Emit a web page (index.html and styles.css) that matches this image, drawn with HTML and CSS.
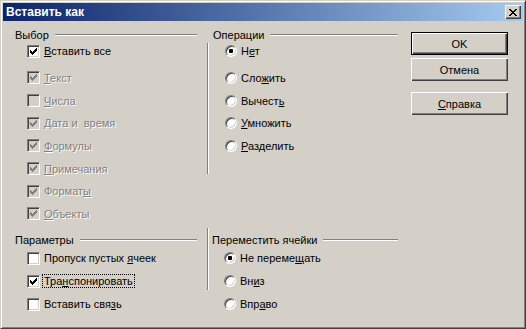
FILE: index.html
```html
<!DOCTYPE html>
<html>
<head>
    <meta charset="utf-8">
    <title>Вставить как</title>
    <link rel="stylesheet" href="styles.css">
</head>
<body>
<div class="window">
    <div class="titlebar">
        <span class="title">Вставить как</span>
        <span class="close">
            <svg width="8" height="7" viewBox="0 0 8 7"><path d="M0 0h2v1H0zM6 0h2v1H6zM1 1h2v1H1zM5 1h2v1H5zM2 2h4v1H2zM3 3h2v1H3zM2 4h4v1H2zM1 5h2v1H1zM5 5h2v1H5zM0 6h2v1H0zM6 6h2v1H6z" fill="#000"/></svg>
        </span>
    </div>

    <div class="content">
        <!-- Выбор -->
        <div class="group">
            <div class="legend"><span>Выбор</span><i class="rule"></i></div>
            <div class="list sel-list">
                <div class="opt first"><span class="cb"><svg class="tick" width="7" height="7" viewBox="0 0 7 7"><path d="M0.5 2v3M1.5 3v3M2.5 4v3M3.5 3v3M4.5 2v3M5.5 1v3M6.5 0v3" stroke="#000"/></svg></span><span><u>В</u>ставить все</span></div>
                <div class="opt off"><span class="cb"><svg class="tick" width="7" height="7" viewBox="0 0 7 7"><path d="M0.5 2v3M1.5 3v3M2.5 4v3M3.5 3v3M4.5 2v3M5.5 1v3M6.5 0v3" stroke="#808080"/></svg></span><span><u>Т</u>екст</span></div>
                <div class="opt off"><span class="cb"></span><span><u>Ч</u>исла</span></div>
                <div class="opt off"><span class="cb"><svg class="tick" width="7" height="7" viewBox="0 0 7 7"><path d="M0.5 2v3M1.5 3v3M2.5 4v3M3.5 3v3M4.5 2v3M5.5 1v3M6.5 0v3" stroke="#808080"/></svg></span><span><u>Д</u>ата и&nbsp; время</span></div>
                <div class="opt off"><span class="cb"><svg class="tick" width="7" height="7" viewBox="0 0 7 7"><path d="M0.5 2v3M1.5 3v3M2.5 4v3M3.5 3v3M4.5 2v3M5.5 1v3M6.5 0v3" stroke="#808080"/></svg></span><span><u>Ф</u>ормулы</span></div>
                <div class="opt off"><span class="cb"><svg class="tick" width="7" height="7" viewBox="0 0 7 7"><path d="M0.5 2v3M1.5 3v3M2.5 4v3M3.5 3v3M4.5 2v3M5.5 1v3M6.5 0v3" stroke="#808080"/></svg></span><span><u>П</u>римечания</span></div>
                <div class="opt off"><span class="cb"><svg class="tick" width="7" height="7" viewBox="0 0 7 7"><path d="M0.5 2v3M1.5 3v3M2.5 4v3M3.5 3v3M4.5 2v3M5.5 1v3M6.5 0v3" stroke="#808080"/></svg></span><span>Формат<u>ы</u></span></div>
                <div class="opt off"><span class="cb"><svg class="tick" width="7" height="7" viewBox="0 0 7 7"><path d="M0.5 2v3M1.5 3v3M2.5 4v3M3.5 3v3M4.5 2v3M5.5 1v3M6.5 0v3" stroke="#808080"/></svg></span><span><u>О</u>бъекты</span></div>
            </div>
        </div>

        <!-- Операции -->
        <div class="group mid">
            <div class="legend"><span>Операции</span><i class="rule"></i></div>
            <div class="list sel-list ops">
                <div class="opt first"><span class="rb on"></span><span>Н<u>е</u>т</span></div>
                <div class="opt"><span class="rb"></span><span>Сло<u>ж</u>ить</span></div>
                <div class="opt"><span class="rb"></span><span>Вычест<u>ь</u></span></div>
                <div class="opt"><span class="rb"></span><span><u>У</u>множить</span></div>
                <div class="opt"><span class="rb"></span><span><u>Р</u>азделить</span></div>
            </div>
        </div>

        <div class="buttons">
            <span class="btn default">OK</span>
            <span class="btn">Отмена</span>
            <span class="btn help"><u>С</u>правка</span>
        </div>

        <!-- Параметры -->
        <div class="group">
            <div class="legend"><span>Параметры</span><i class="rule"></i></div>
            <div class="list small-list">
                <div class="opt"><span class="cb"></span><span>Пропуск пустых <u>я</u>чеек</span></div>
                <div class="opt"><span class="cb"><svg class="tick" width="7" height="7" viewBox="0 0 7 7"><path d="M0.5 2v3M1.5 3v3M2.5 4v3M3.5 3v3M4.5 2v3M5.5 1v3M6.5 0v3" stroke="#000"/></svg></span><span class="focus">Тра<u>н</u>спонировать</span></div>
                <div class="opt"><span class="cb"></span><span>Вставить свя<u>з</u>ь</span></div>
            </div>
        </div>

        <!-- Переместить ячейки -->
        <div class="group mid boxed">
            <div class="legend"><span>Переместить ячейки</span><i class="rule"></i></div>
            <div class="list small-list">
                <div class="opt"><span class="rb on"></span><span>Не переме<u>щ</u>ать</span></div>
                <div class="opt"><span class="rb"></span><span>Вн<u>и</u>з</span></div>
                <div class="opt"><span class="rb"></span><span>Впр<u>а</u>во</span></div>
            </div>
        </div>
    </div>
</div>
</body>
</html>
```

FILE: styles.css
```css
html, body {
    margin: 0;
    padding: 0;
    overflow: hidden;
}

body {
    font: 11px/16px "Liberation Sans", Arial, sans-serif;
    color: #000;
    background: #d4d0c8;
}

u {
    text-decoration: underline;
}

.window {
    width: 526px;
    height: 329px;
    box-sizing: border-box;
    border: 1px solid;
    border-color: #d4d0c8 #404040 #404040 #d4d0c8;
    box-shadow: inset 1px 1px #fff, inset -1px -1px #808080;
    padding: 2px;
    background: #d4d0c8;
}

.titlebar {
    height: 18px;
    display: flex;
    align-items: center;
    justify-content: space-between;
    padding: 0 2px 0 3px;
    background: linear-gradient(to right, #0a246a, #a6caf0);
}

.title {
    color: #fff;
    font-weight: bold;
    font-size: 12px;
}

.close {
    width: 16px;
    height: 14px;
    box-sizing: border-box;
    display: flex;
    align-items: center;
    justify-content: center;
    background: #d4d0c8;
    box-shadow: inset 1px 1px #fff, inset -1px -1px #404040, inset -2px -2px #808080;
}

.content {
    display: grid;
    grid-template-columns: 182px 191px 100px;
    grid-template-rows: 205px auto;
    column-gap: 10px;
    padding: 7px 0 0 12px;
}

.legend {
    display: flex;
    align-items: center;
    height: 14px;
    line-height: 14px;
}

.rule {
    flex: 1;
    margin-left: 6px;
    border-top: 1px solid #808080;
    border-bottom: 1px solid #fff;
}

.list {
    display: flex;
    flex-direction: column;
}

.sel-list {
    margin-top: 1px;
    gap: 6.67px;
}

.sel-list .first {
    margin-bottom: 4.33px;
}

.small-list {
    margin-top: 3px;
    gap: 7px;
}

.opt {
    height: 16px;
    display: flex;
    align-items: center;
    gap: 4px;
    padding-left: 12px;
}

.mid .legend {
    padding-left: 6px;
}

.mid .opt {
    padding-left: 17px;
}

.ops {
    border-left: 1px solid #808080;
    box-shadow: inset 1px 0 #fff;
    min-height: 131px;
}

.boxed {
    border-left: 1px solid #808080;
    box-shadow: inset 1px 0 #fff;
    margin-top: -5px;
    padding-top: 5px;
    height: 57px;
}

.boxed .legend {
    padding-left: 4px;
}

.boxed .opt {
    padding-left: 16px;
}

.off {
    color: #808080;
}

.off span:last-child {
    text-shadow: 1px 1px 0 #fff;
}

/* checkbox */
.cb {
    width: 13px;
    height: 13px;
    box-sizing: border-box;
    flex: none;
    display: flex;
    align-items: center;
    justify-content: center;
    background: #fff;
    border: 1px solid;
    border-color: #808080 #fff #fff #808080;
    box-shadow: inset 1px 1px #404040, inset -1px -1px #d4d0c8;
}

.off .cb {
    background: #d4d0c8;
}

.tick {
    display: block;
    shape-rendering: crispEdges;
}

/* radio */
.rb {
    width: 12px;
    height: 12px;
    box-sizing: border-box;
    flex: none;
    display: flex;
    align-items: center;
    justify-content: center;
    border-radius: 50%;
    background: #fff;
    border: 1px solid;
    border-color: #808080 #fff #fff #808080;
    box-shadow: inset 1px 1px #404040, inset -1px -1px #d4d0c8;
}

.rb.on::after {
    content: "";
    width: 4px;
    height: 4px;
    border-radius: 1px;
    background: #000;
}

.focus {
    border: 1px dotted #000;
    line-height: 12px;
    padding: 0 1px;
    margin-left: -2px;
}

/* buttons */
.buttons {
    grid-column: 3;
    grid-row: 1 / 3;
    margin: 4px 0 0 3px;
    display: flex;
    flex-direction: column;
    gap: 3px;
}

.btn {
    height: 23px;
    box-sizing: border-box;
    display: flex;
    align-items: center;
    justify-content: center;
    background: #d4d0c8;
    box-shadow: inset 1px 1px #fff, inset -1px -1px #404040, inset -2px -2px #808080;
}

.btn.default {
    border: 1px solid #000;
}

.btn.help {
    margin-top: 8px;
}
```
